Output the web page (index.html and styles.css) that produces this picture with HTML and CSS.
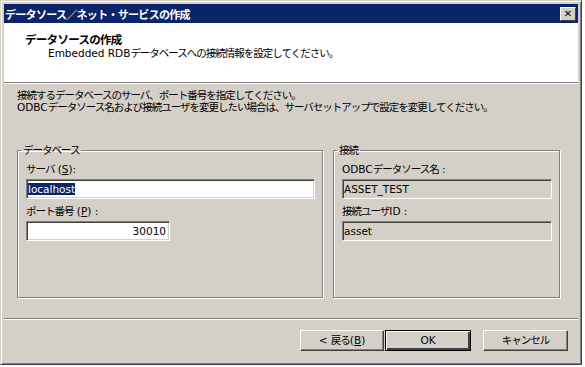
FILE: index.html
```html
<!DOCTYPE html>
<html lang="ja">
<head>
	<meta charset="UTF-8">
	<title>データソース／ネット・サービスの作成</title>
	<link rel="stylesheet" href="styles.css">
</head>
<body>

	<div class="window">
		<!-- タイトルバー -->
		<div class="titlebar">
			<span class="title">データソース／ネット・サービスの作成</span>
			<span class="close">✕</span>
		</div>

		<!-- ヘッダー -->
		<div class="header">
			<div class="h-title">データソースの作成</div>
			<div class="h-sub"><span class="en">Embedded RDB</span>データベースへの接続情報を設定してください。</div>
		</div>

		<!-- 本体 -->
		<div class="body">
			<p class="intro">接続するデータベースのサーバ、ポート番号を指定してください。<br><span class="en">ODBC</span>データソース名および接続ユーザを変更したい場合は、サーバセットアップで設定を変更してください。</p>

			<div class="groups">
				<fieldset class="group group-db">
					<legend>データベース</legend>
					<div class="label">サーバ<span class="en"> (<u>S</u>):</span></div>
					<div class="field field-server"><span class="sel">localhost</span></div>
					<div class="label">ポート番号<span class="en"> (<u>P</u>) :</span></div>
					<div class="field field-port">30010</div>
				</fieldset>

				<fieldset class="group group-conn">
					<legend>接続</legend>
					<div class="label"><span class="en">ODBC</span>データソース名<span class="en"> :</span></div>
					<div class="field readonly">ASSET_TEST</div>
					<div class="label">接続ユーザ<span class="en">ID :</span></div>
					<div class="field readonly">asset</div>
				</fieldset>
			</div>
		</div>

		<!-- ボタン -->
		<div class="footer">
			<span class="btn btn-back"><span class="en">&lt; </span>戻る<span class="en">(<u>B</u>)</span></span>
			<span class="btn btn-ok"><span class="en">OK</span></span>
			<span class="btn btn-cancel">キャンセル</span>
		</div>
	</div>

</body>
</html>
```

FILE: styles.css
```css
*{
	margin: 0;
	padding: 0;
	box-sizing: border-box;
}
body{
	background: #fff;
	font-family: "DejaVu Sans", "Noto Sans CJK JP", sans-serif;
	font-size: 10.5px;
	letter-spacing: -1px;
	color: #000;
}
.en{
	letter-spacing: 0;
}
.window{
	width: 582px;
	height: 365px;
	display: flex;
	flex-direction: column;
	background: #d4d0c8;
	border: 1px solid;
	border-color: #d4d0c8 #404040 #404040 #d4d0c8;
	box-shadow: inset 1px 1px #fff, inset -1px -1px #808080;
	padding: 3px;
}
.titlebar{
	height: 19px;
	background: #0a246a;
	display: flex;
	align-items: center;
	justify-content: space-between;
	padding: 0 2px 0 1px;
}
.title{
	color: #fff;
	font-weight: bold;
	font-size: 11px;
	letter-spacing: -0.7px;
}
.close{
	width: 16px;
	height: 14px;
	background: #d4d0c8;
	border: 1px solid;
	border-color: #fff #404040 #404040 #fff;
	font-size: 10px;
	font-weight: bold;
	line-height: 12px;
	text-align: center;
	letter-spacing: 0;
}
.header{
	height: 60px;
	background: #fff;
	border-bottom: 1px solid #808080;
	box-shadow: 0 1px #fff;
	padding: 10px 0 0 21px;
}
.h-title{
	font-weight: bold;
	font-size: 11.5px;
	line-height: 14px;
	letter-spacing: -0.7px;
}
.h-sub{
	line-height: 12px;
	padding-left: 23px;
}
.body{
	flex: 1;
	display: flex;
	flex-direction: column;
	padding: 6px 18px 20px 13px;
}
.intro{
	line-height: 12px;
}
.groups{
	flex: 1;
	display: flex;
	gap: 10px;
	margin-top: 31px;
}
.group{
	border: 1px solid #808080;
	box-shadow: inset 1px 1px #fff, 1px 1px #fff;
	padding: 7px 7px 0 8px;
}
.group legend{
	margin-left: -5px;
	padding: 0 2px;
	line-height: 12px;
}
.group-db{
	width: 306px;
}
.group-conn{
	flex: 1;
}
.label{
	line-height: 12px;
	margin-bottom: 4px;
}
.field{
	height: 20px;
	background: #fff;
	border: 1px solid;
	border-color: #808080 #fff #fff #808080;
	box-shadow: inset 1px 1px #404040, inset -1px -1px #d4d0c8;
	padding: 3px 3px 0 1px;
	line-height: 13px;
	margin-bottom: 6px;
	letter-spacing: 0;
}
.field-port{
	width: 144px;
	text-align: right;
}
.readonly{
	background: #d4d0c8;
}
.sel{
	background: #0a246a;
	color: #fff;
}
.footer{
	height: 43px;
	border-top: 1px solid #808080;
	box-shadow: inset 0 1px #fff;
	display: flex;
	justify-content: flex-end;
	padding: 11px 10px 0 0;
}
.btn{
	height: 21px;
	border: 1px solid;
	border-color: #fff #404040 #404040 #fff;
	box-shadow: inset -1px -1px #808080;
	text-align: center;
	line-height: 18px;
}
.btn-back{
	width: 84px;
}
.btn-ok{
	width: 86px;
	margin-left: 1px;
	border: 1px solid #000;
	box-shadow: inset 1px 1px #fff, inset -2px -2px #404040, inset -1px -1px #808080;
}
.btn-cancel{
	width: 85px;
	margin-left: 12px;
}
```
